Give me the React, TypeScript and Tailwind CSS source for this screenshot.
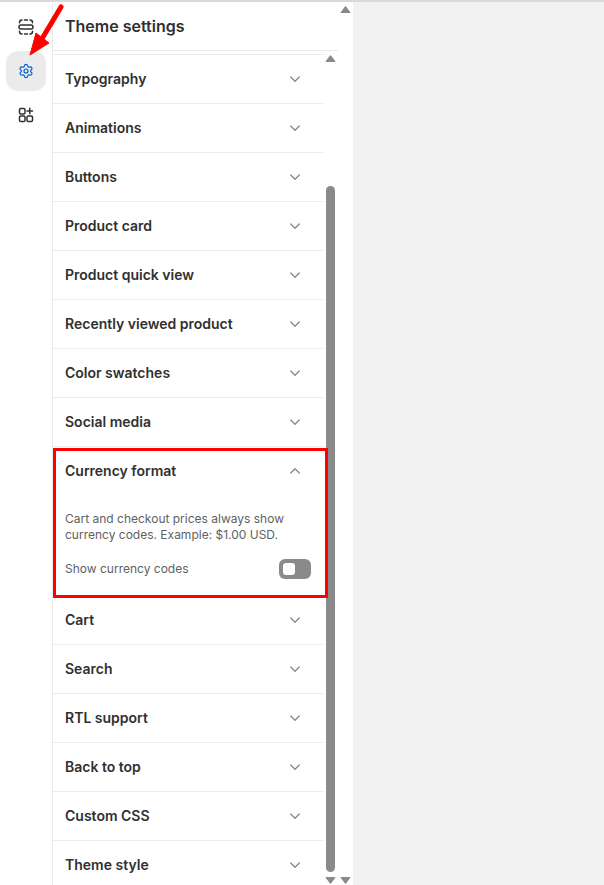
import { Settings } from 'lucide-react';

const ScrollArrow = ({ down = false }: { down?: boolean }) => (
  <svg width="11" height="7" viewBox="0 0 11 7" className={down ? 'rotate-180' : ''}>
    <path d="M5.5 0.5 L10 6.5 H1 Z" fill="#8a8a8a" stroke="#8a8a8a" strokeLinejoin="round" />
  </svg>
);

const Chevron = ({ up = false }: { up?: boolean }) => (
  <svg width="20" height="20" viewBox="0 0 20 20" fill="none" className={up ? 'rotate-180' : ''}>
    <path d="M5.75 8 L10 12.25 L14.25 8" stroke="#8a8a8a" strokeWidth="1.4" strokeLinecap="round" strokeLinejoin="round" />
  </svg>
);

const Row = ({ title }: { title: string }) => (
  <div className="flex h-[49px] items-center justify-between border-b border-[#ebebeb] pl-3 pr-[18px]">
    <span className="text-sm font-semibold text-[#303030]">{title}</span>
    <Chevron />
  </div>
);

const before = ['Typography', 'Animations', 'Buttons', 'Product card', 'Product quick view', 'Recently viewed product', 'Color swatches', 'Social media'];
const after = ['Cart', 'Search', 'RTL support', 'Back to top', 'Custom CSS', 'Theme style'];

export default function App() {
  return (
    <div className="relative flex h-[885px] w-[604px] overflow-hidden border-t-2 border-[#d9d9d9] bg-white font-['Inter',sans-serif]">
      {/* left rail */}
      <div className="flex w-[53px] shrink-0 flex-col items-center gap-1 border-r border-[#ebebeb] pt-[5px] pr-[1px]">
        <div className="flex h-10 w-10 items-center justify-center">
          <svg width="20" height="20" viewBox="0 0 20 20" fill="none" stroke="#303030" strokeWidth="1.5" strokeLinecap="round">
            <path d="M5 8h10a2 2 0 0 1 0 4H5a2 2 0 0 1 0-4Z" />
            <path d="M3.5 5.8V5.5a2.5 2.5 0 0 1 2.5-2.5M8.5 3h3M14 3a2.5 2.5 0 0 1 2.5 2.5v.3M3.5 14.2v.3A2.5 2.5 0 0 0 6 17M8.5 17h3M14 17a2.5 2.5 0 0 0 2.5-2.5v-.3" />
          </svg>
        </div>
        <div className="flex h-10 w-10 items-center justify-center rounded-xl bg-[#ebebeb]">
          <Settings size={16} strokeWidth={1.75} color="#005bd3" />
        </div>
        <div className="flex h-10 w-10 items-center justify-center">
          <svg width="20" height="20" viewBox="0 0 20 20" fill="none" stroke="#303030" strokeWidth="1.5" strokeLinecap="round" strokeLinejoin="round">
            <rect x="3.5" y="3.5" width="5.5" height="5.5" rx="1.25" />
            <rect x="3.5" y="11" width="5.5" height="5.5" rx="1.25" />
            <rect x="11" y="11" width="5.5" height="5.5" rx="1.25" />
            <path d="M13.75 3.25v5.5M11 6h5.5" />
          </svg>
        </div>
      </div>

      {/* settings panel */}
      <div className="flex w-[285px] shrink-0 flex-col">
        <div className="flex h-[49px] shrink-0 items-center border-b border-[#ebebeb] pl-3">
          <h1 className="text-base font-semibold text-[#303030]">Theme settings</h1>
        </div>
        <div className="flex min-h-0 flex-1 pt-[3px]">
          <div className="w-[270px] shrink-0 border-t border-[#ebebeb]">
            {before.map((title) => <Row key={title} title={title} />)}
            <div className="relative h-[149px] pl-3 pr-3">
              <div className="flex h-[48px] items-center justify-between pr-[6px]">
                <span className="text-sm font-semibold text-[#303030]">Currency format</span>
                <Chevron up />
              </div>
              <p className="mt-4 text-xs leading-4 text-[#616161]">
                Cart and checkout prices always show currency codes. Example: $1.00 USD.
              </p>
              <div className="mt-4 flex items-center justify-between">
                <span className="text-xs leading-4 text-[#616161]">Show currency codes</span>
                <div className="flex h-5 w-8 items-center rounded-md bg-[#8a8a8a] pl-[4px]">
                  <div className="h-3 w-3 rounded-[3px] bg-white" />
                </div>
              </div>
              {/* annotation box */}
              <div className="absolute left-0 top-px z-10 h-[150px] w-[275px] border-[3px] border-[#ff0000]" />
            </div>
            {after.map((title) => <Row key={title} title={title} />)}
          </div>
          {/* inner scrollbar */}
          <div className="flex w-[15px] shrink-0 flex-col items-center pb-[1px] pt-[1px]">
            <ScrollArrow />
            <div className="mt-[124px] h-[686px] w-[9px] rounded-full bg-[#8a8a8a]" />
            <div className="mt-auto"><ScrollArrow down /></div>
          </div>
        </div>
      </div>

      {/* outer scrollbar */}
      <div className="flex w-[15px] shrink-0 flex-col items-center justify-between pb-[1px] pt-[4px]">
        <ScrollArrow />
        <ScrollArrow down />
      </div>

      <div className="flex-1 bg-[#f1f1f1]" />

      {/* annotation arrow */}
      <svg className="absolute left-0 -top-[2px]" width="70" height="60" viewBox="0 0 70 60">
        <path d="M61 7 L43 37" stroke="#ff0000" strokeWidth="5" strokeLinecap="round" />
        <path d="M30 55 L36 33 L49 43 Z" fill="#ff0000" stroke="#ff0000" strokeWidth="1" strokeLinejoin="round" />
      </svg>
    </div>
  );
}
